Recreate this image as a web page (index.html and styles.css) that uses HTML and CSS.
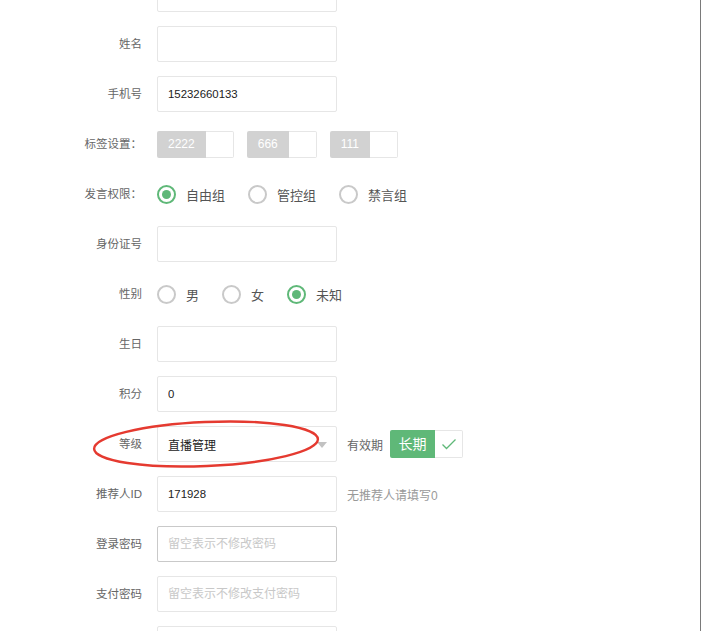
FILE: index.html
```html
<!DOCTYPE html>
<html lang="zh-CN">
<head>
    <meta charset="UTF-8">
    <meta name="viewport" content="width=device-width, initial-scale=1.0">
    <title>编辑会员</title>
    <link rel="stylesheet" href="styles.css">
</head>
<body>
<div class="page">
    <form class="member-form">
        <div class="form-item">
            <label class="form-label"></label>
            <div class="form-block"><input class="form-input" type="text"></div>
        </div>
        <div class="form-item">
            <label class="form-label">姓名</label>
            <div class="form-block"><input class="form-input" type="text"></div>
        </div>
        <div class="form-item">
            <label class="form-label">手机号</label>
            <div class="form-block"><input class="form-input num" type="text" value="15232660133"></div>
        </div>
        <div class="form-item">
            <label class="form-label">标签设置：</label>
            <div class="form-block tags">
                <div class="tag"><span class="tag-name">2222</span><span class="tag-box"></span></div>
                <div class="tag"><span class="tag-name">666</span><span class="tag-box"></span></div>
                <div class="tag"><span class="tag-name">111</span><span class="tag-box"></span></div>
            </div>
        </div>
        <div class="form-item">
            <label class="form-label">发言权限：</label>
            <div class="form-block radios">
                <div class="radio checked"><i class="radio-icon"></i><span>自由组</span></div>
                <div class="radio"><i class="radio-icon"></i><span>管控组</span></div>
                <div class="radio"><i class="radio-icon"></i><span>禁言组</span></div>
            </div>
        </div>
        <div class="form-item">
            <label class="form-label">身份证号</label>
            <div class="form-block"><input class="form-input" type="text"></div>
        </div>
        <div class="form-item">
            <label class="form-label">性别</label>
            <div class="form-block radios">
                <div class="radio"><i class="radio-icon"></i><span>男</span></div>
                <div class="radio"><i class="radio-icon"></i><span>女</span></div>
                <div class="radio checked"><i class="radio-icon"></i><span>未知</span></div>
            </div>
        </div>
        <div class="form-item">
            <label class="form-label">生日</label>
            <div class="form-block"><input class="form-input" type="text"></div>
        </div>
        <div class="form-item">
            <label class="form-label">积分</label>
            <div class="form-block"><input class="form-input num" type="text" value="0"></div>
        </div>
        <div class="form-item">
            <label class="form-label">等级</label>
            <div class="form-block">
                <div class="select">
                    <span>直播管理</span>
                    <i class="select-arrow"></i>
                </div>
            </div>
            <div class="form-aside">有效期</div>
            <div class="switch">
                <span class="switch-on">长期</span>
                <span class="switch-check">
                    <svg width="16" height="12" viewBox="0 0 16 12"><path d="M1.5 6.5 L5.5 10.5 L14.5 1.5" fill="none" stroke="#5FB878" stroke-width="1.3"/></svg>
                </span>
            </div>
            <svg class="mark" width="240" height="56" viewBox="0 0 240 56">
                <ellipse cx="118" cy="27" rx="112" ry="22" fill="none" stroke="#e53a30" stroke-width="2.4" transform="rotate(-2.5 118 27)"/>
            </svg>
        </div>
        <div class="form-item">
            <label class="form-label">推荐人ID</label>
            <div class="form-block"><input class="form-input num" type="text" value="171928"></div>
            <div class="form-aside hint">无推荐人请填写0</div>
        </div>
        <div class="form-item">
            <label class="form-label">登录密码</label>
            <div class="form-block"><input class="form-input active" type="password" placeholder="留空表示不修改密码"></div>
        </div>
        <div class="form-item">
            <label class="form-label">支付密码</label>
            <div class="form-block"><input class="form-input" type="password" placeholder="留空表示不修改支付密码"></div>
        </div>
        <div class="form-item">
            <label class="form-label"></label>
            <div class="form-block"><input class="form-input" type="text"></div>
        </div>
    </form>
</div>
</body>
</html>
```

FILE: styles.css
```css
html, body {
    margin: 0;
    height: 100%;
    overflow: hidden;
}
body {
    font-family: "Liberation Sans", "Noto Sans CJK SC", sans-serif;
    font-size: 12px;
    color: #333;
    background: #fff;
}
.page {
    display: flow-root;
    height: 100%;
    border-right: 1px solid #7a7a7a;
    box-sizing: border-box;
}
.member-form {
    margin-top: -24px;
    display: flex;
    flex-direction: column;
    gap: 14px;
}
.form-item {
    position: relative;
    display: flex;
    align-items: center;
    height: 36px;
}
.form-label {
    width: 142px;
    padding-right: 15px;
    text-align: right;
    color: #666;
    font-size: 11.5px;
    line-height: 20px;
}
.form-block {
    width: 180px;
}
.form-input {
    display: block;
    box-sizing: border-box;
    width: 180px;
    height: 36px;
    padding: 0 10px;
    border: 1px solid #e6e6e6;
    border-radius: 2px;
    background: #fff;
    font-family: inherit;
    font-size: 12px;
    color: #333;
    outline: none;
}
.form-input.num {
    font-size: 11.4px;
    color: #222;
}
.form-input.active {
    border-color: #c9c9c9;
}
.form-input::placeholder {
    color: #c8c8c8;
}

/* tags */
.tags {
    display: flex;
    gap: 13px;
    width: auto;
}
.tag {
    display: flex;
    height: 27px;
}
.tag-name {
    background: #d2d2d2;
    color: #fff;
    font-size: 12px;
    line-height: 27px;
    padding: 0 11px;
    border-radius: 2px 0 0 2px;
}
.tag-box {
    width: 27px;
    border: 1px solid #e6e6e6;
    border-left: none;
    border-radius: 0 2px 2px 0;
    background: #fff;
}

/* radios */
.radios {
    display: flex;
    width: auto;
}
.radio {
    display: flex;
    align-items: center;
    margin-right: 23px;
    font-size: 13px;
    color: #555;
}
.radio-icon {
    box-sizing: border-box;
    width: 19px;
    height: 19px;
    border: 2px solid #c9c9c9;
    border-radius: 50%;
    margin-right: 10px;
    display: flex;
    align-items: center;
    justify-content: center;
}
.radio.checked .radio-icon {
    border-color: #5FB878;
}
.radio.checked .radio-icon::after {
    content: "";
    width: 9px;
    height: 9px;
    border-radius: 50%;
    background: #5FB878;
}

/* select */
.select {
    position: relative;
    box-sizing: border-box;
    width: 180px;
    height: 36px;
    border: 1px solid #e6e6e6;
    border-radius: 2px;
    padding: 0 10px;
    display: flex;
    align-items: center;
    color: #222;
    font-size: 12px;
}
.select-arrow {
    position: absolute;
    right: 9px;
    top: 15px;
    border: 5px solid transparent;
    border-top: 6px solid #c2c2c2;
}

.form-aside {
    margin-left: 10px;
    color: #666;
    font-size: 12px;
}
.form-aside.hint {
    color: #999;
}

/* switch */
.switch {
    display: flex;
    height: 28px;
    margin-left: 7px;
}
.switch-on {
    width: 45px;
    background: #5FB878;
    color: #fff;
    font-size: 14px;
    line-height: 28px;
    text-align: center;
    border-radius: 2px 0 0 2px;
}
.switch-check {
    box-sizing: border-box;
    width: 28px;
    border: 1px solid #e6e6e6;
    border-left: none;
    border-radius: 0 2px 2px 0;
    display: flex;
    align-items: center;
    justify-content: center;
}

/* red annotation drawn over the grade row */
.mark {
    position: absolute;
    left: 88px;
    top: -9px;
    pointer-events: none;
}
```
